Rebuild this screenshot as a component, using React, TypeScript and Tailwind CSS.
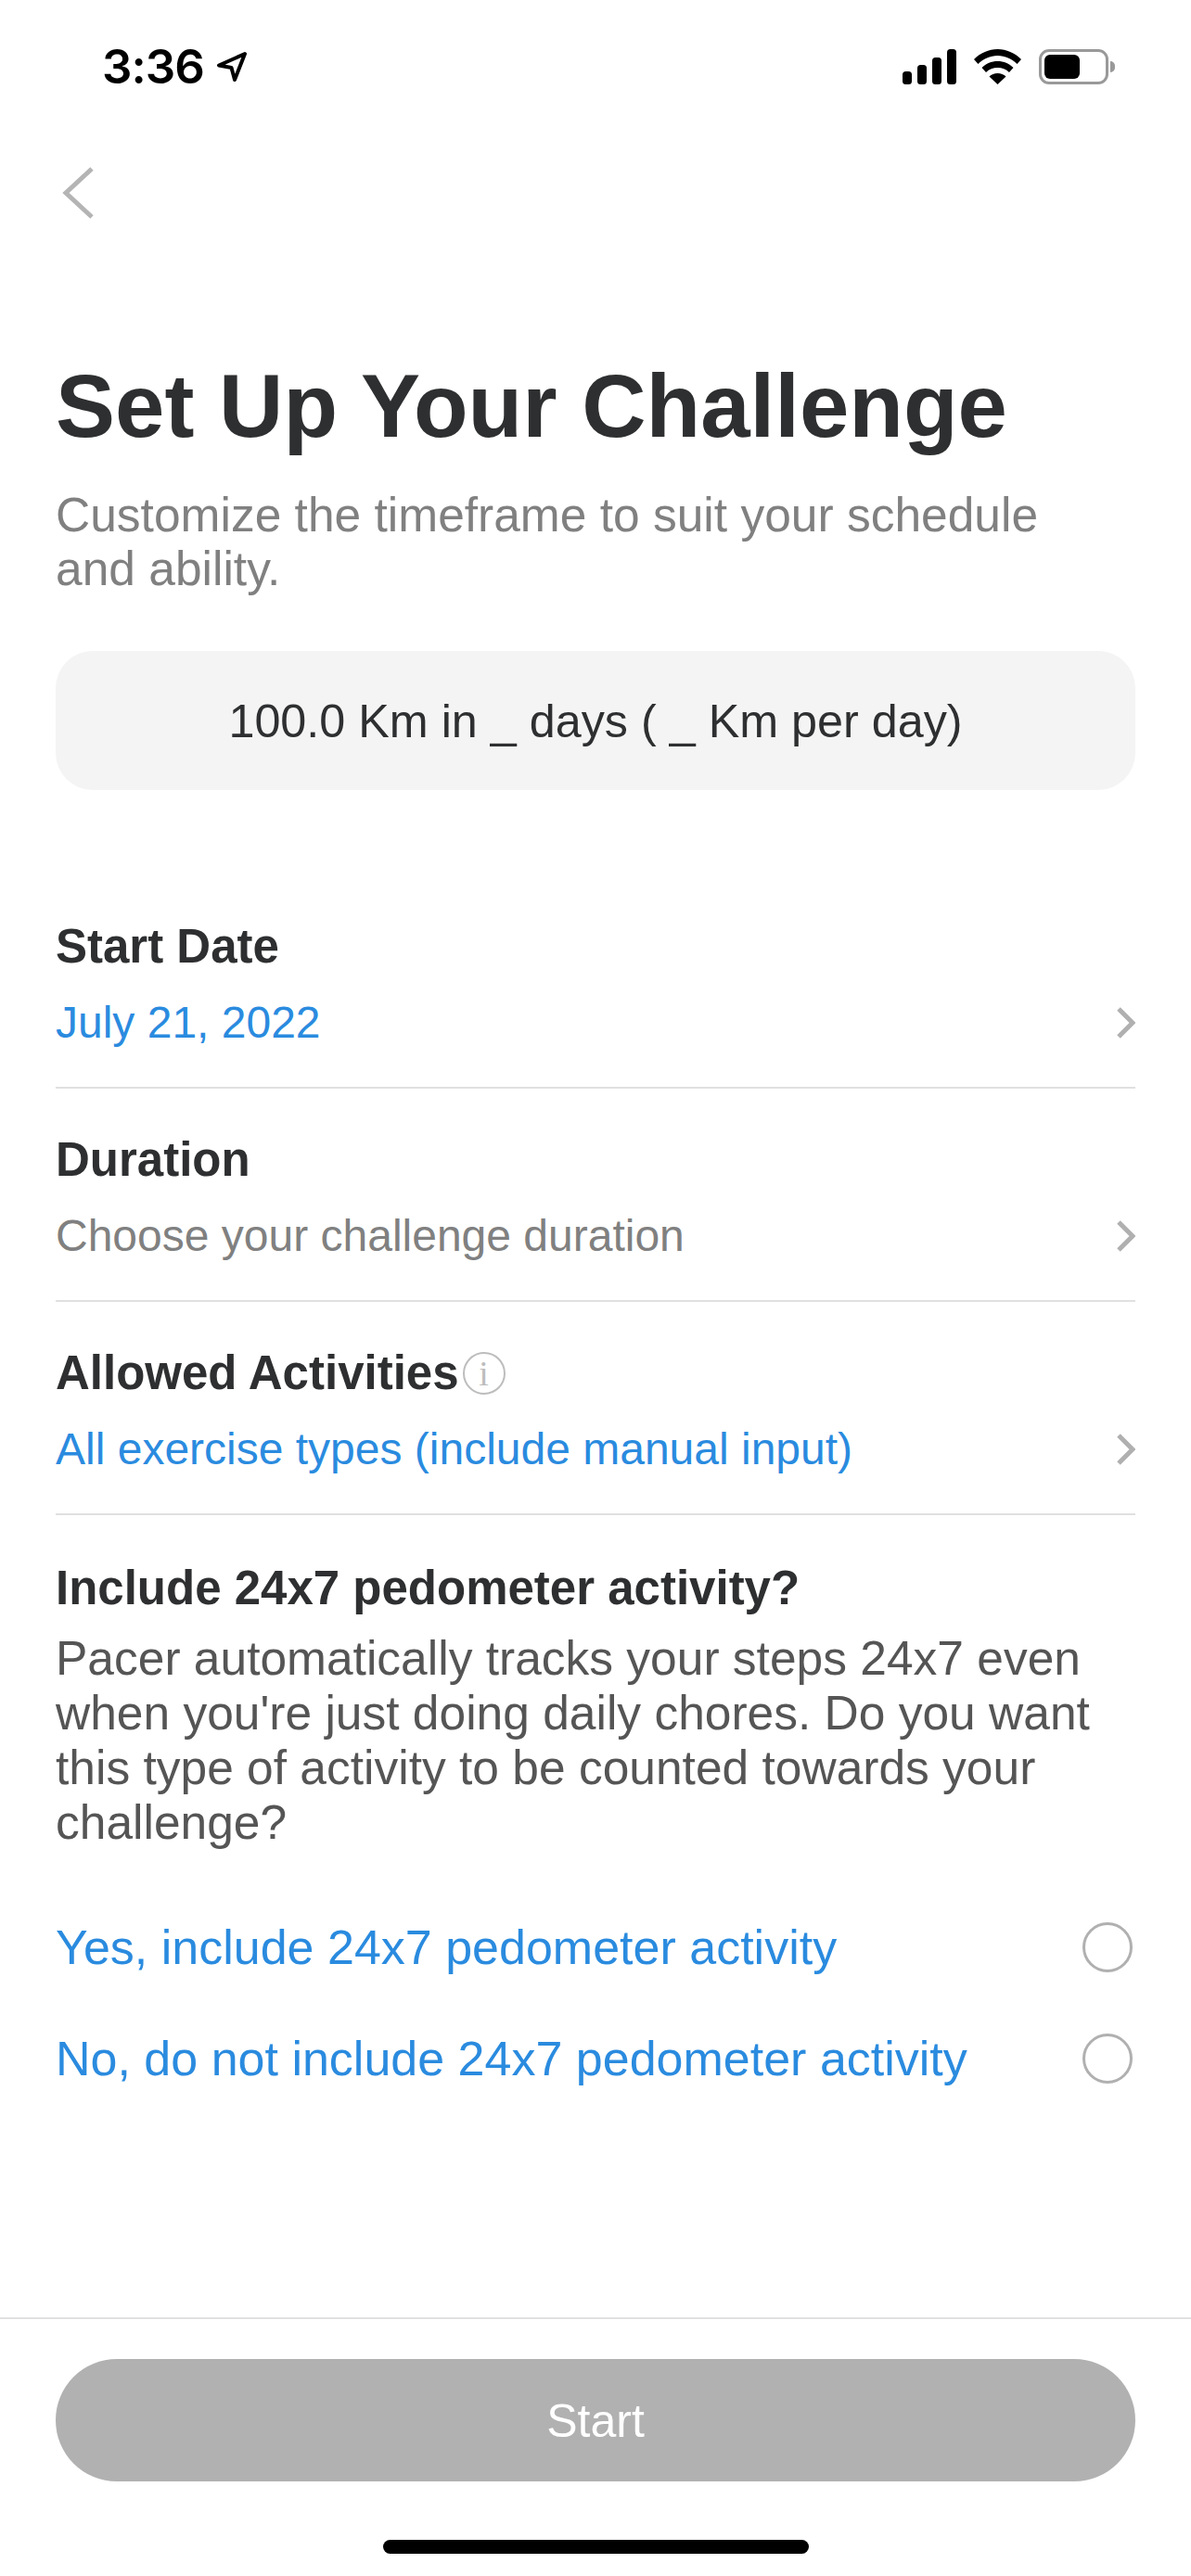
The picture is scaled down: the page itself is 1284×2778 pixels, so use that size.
function StatusBar() {
  return (
    <div className="flex h-[124px] items-start justify-between pl-[110px] pr-[82px] pt-[50px]">
      <div className="flex items-center gap-[13px]">
        <span className="font-['Inter'] text-[51px] leading-[44px] font-semibold tracking-[-1px] text-black">3:36</span>
        <svg width="34" height="34" viewBox="0 0 34 34" fill="none" stroke="black" strokeWidth="4" strokeLinejoin="round">
          <path d="M31 3 3 15.500l13.500 2.500L20 31z" />
        </svg>
      </div>
      <div className="flex items-center pt-[3px]">
        <svg width="58" height="38" viewBox="0 0 58 38" fill="black">
          <rect x="0" y="24" width="10" height="14" rx="3.5" />
          <rect x="16" y="17" width="10" height="21" rx="3.5" />
          <rect x="32" y="9" width="10" height="29" rx="3.5" />
          <rect x="48" y="0" width="10" height="38" rx="3.5" />
        </svg>
        <svg className="ml-[19px]" width="51" height="38" viewBox="0 0 51 38" fill="black">
          <path d="M25.5 0C35 0 44 4 51 11l-4.5 5C41 10.500 33.500 7 25.500 7S10 10.500 4.500 16L0 11C7 4 16 0 25.500 0z" />
          <path d="M25.500 13c6.500 0 12.500 2.500 17 7l-4.500 5c-3.300-3.200-7.700-5-12.500-5s-9.200 1.800-12.500 5l-4.500-5c4.500-4.500 10.500-7 17-7z" />
          <path d="M25.500 26c3.500 0 6.700 1.300 9 3.500L25.500 38l-9-8.500c2.300-2.200 5.500-3.500 9-3.500z" />
        </svg>
        <div className="ml-[19px] flex h-[38px] w-[75px] items-center rounded-[11px] border-[3px] border-[#999999] p-[3px]">
          <div className="h-full w-[38px] rounded-[6px] bg-black" />
        </div>
        <div className="ml-[2px] h-[12px] w-[5px] rounded-r-full bg-[#999999]" />
      </div>
    </div>
  );
}

type SettingRowProps = {
  label: string;
  value: string;
  highlighted?: boolean;
  info?: boolean;
  first?: boolean;
};

function SettingRow({ label, value, highlighted, info, first }: SettingRowProps) {
  return (
    <div className={`border-b-[2px] border-[#e0e0e0] pb-[40px] ${first ? 'pt-0' : 'pt-[48px]'}`}>
      <div className="flex items-center gap-[4px]">
        <span className="text-[51px] leading-[58px] font-bold text-[#2e2f30]">{label}</span>
        {info && (
          <span className="flex h-[46px] w-[46px] items-center justify-center rounded-full border-[2px] border-[#bdbdbd] font-['Liberation_Serif'] text-[38px] leading-none text-[#bdbdbd]">
            i
          </span>
        )}
      </div>
      <div className="mt-[24px] flex items-center justify-between">
        <span className={`text-[48px] leading-[58px] ${highlighted ? 'text-[#2a8bdf]' : 'text-[#808080]'}`}>{value}</span>
        <svg width="20" height="34" viewBox="0 0 20 34" fill="none" stroke="#b0b0b0" strokeWidth="5">
          <path d="M2 2l15 15L2 32" />
        </svg>
      </div>
    </div>
  );
}

function RadioRow({ label }: { label: string }) {
  return (
    <div className="flex h-[120px] items-center justify-between">
      <span className="text-[52px] leading-[58px] text-[#2a8bdf]">{label}</span>
      <span className="mr-[3px] h-[54px] w-[54px] rounded-full border-[3px] border-[#b0b0b0]" />
    </div>
  );
}

export default function App() {
  return (
    <div className="flex h-[2778px] w-[1284px] flex-col bg-white font-['Liberation_Sans',sans-serif]">
      <StatusBar />

      <div className="px-[60px]">
        <svg className="mt-[56px] ml-[6px]" width="36" height="56" viewBox="0 0 36 56" fill="none" stroke="#b4b4b4" strokeWidth="5">
          <path d="M33 2 5 28l28 26" />
        </svg>

        <h1 className="mt-[152px] text-[96px] leading-[100px] font-bold text-[#2e2f30]">Set Up Your Challenge</h1>
        <p className="mt-[38px] pr-[40px] text-[51.500px] leading-[58px] text-[#808080]">
          Customize the timeframe to suit your schedule and ability.
        </p>

        <div className="mt-[60px] flex h-[150px] items-center justify-center rounded-[40px] bg-[#f4f4f4] pt-[2px] text-[50.300px] text-[#2e2f30]">
          100.0 Km in _ days ( _ Km per day)
        </div>

        <div className="mt-[140px]">
          <SettingRow first label="Start Date" value="July 21, 2022" highlighted />
          <SettingRow label="Duration" value="Choose your challenge duration" />
          <SettingRow info label="Allowed Activities" value="All exercise types (include manual input)" highlighted />
        </div>

        <h2 className="mt-[50px] text-[51px] leading-[58px] font-bold text-[#2e2f30]">Include 24x7 pedometer activity?</h2>
        <p className="mt-[17px] text-[51.500px] leading-[59px] text-[#555555]">
          Pacer automatically tracks your steps 24x7 even when you're just doing daily chores. Do you want this type of activity to be counted towards your challenge?
        </p>

        <div className="mt-[45px]">
          <RadioRow label="Yes, include 24x7 pedometer activity" />
          <RadioRow label="No, do not include 24x7 pedometer activity" />
        </div>
      </div>

      <div className="mt-auto border-t-[2px] border-[#e0e0e0] px-[60px] pt-[43px]">
        <button className="flex h-[132px] w-full items-center justify-center rounded-full bg-[#b1b1b1] pt-[2px] text-[50px] text-white">
          Start
        </button>
        <div className="mx-auto mt-[63px] mb-[24px] h-[15px] w-[459px] rounded-full bg-black" />
      </div>
    </div>
  );
}
